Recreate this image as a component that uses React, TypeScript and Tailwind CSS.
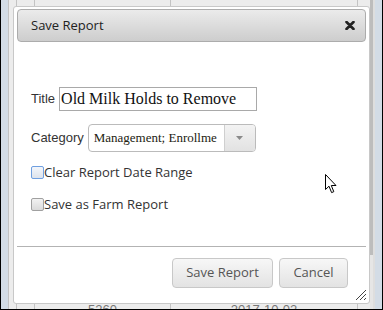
import React from "react";

const sans = { fontFamily: '"Open Sans", "Liberation Sans", sans-serif' };

function Background() {
  // the grid page that sits behind the dialog
  const cols = [
    { w: "w-[8px]", text: "" },
    { w: "w-[18px]", text: "" },
    { w: "w-[136px]", text: "5260" },
    { w: "w-[187px]", text: "2017-10-02" },
    { w: "w-[13px]", text: "" },
  ];
  return (
    <div className="flex h-full">
      <div className="w-[7px] bg-[#d3dce6]" />
      <div className="flex flex-1">
        {cols.map((c, i) => (
          <div
            key={i}
            className={`${c.w} flex flex-col justify-end border-l border-[#c3c3c3] bg-[#ececec]`}
          >
            <div
              className="h-[7px] overflow-visible text-center text-[13px] leading-[16px] text-[#777]"
              style={{ fontFamily: '"Liberation Sans", sans-serif' }}
            >
              {c.text}
            </div>
          </div>
        ))}
      </div>
      <div className="flex w-[3px] flex-col bg-[#e6e6e6]">
        <div className="h-[255px] bg-[#bdbdbd]" />
      </div>
      <div className="w-[2px] bg-[#dedede]" />
      <div className="w-[7px] bg-[#d3dce6]" />
    </div>
  );
}

function Checkbox({ focused }: { focused?: boolean }) {
  return (
    <span
      className={
        focused
          ? "h-[13px] w-[13px] shrink-0 rounded-[2px] border border-[#6f9fe0] bg-gradient-to-b from-[#f3f6fb] to-[#dde3ec]"
          : "h-[13px] w-[13px] shrink-0 rounded-[2px] border border-[#a0a0a0] bg-gradient-to-b from-[#f2f2f2] to-[#dadada]"
      }
    />
  );
}

function Dialog() {
  return (
    <div className="absolute left-[12px] top-[6px] h-[298px] w-[357px] rounded-[3px] border border-[#c8c8c8] bg-white px-[3px] pt-[2px]">
      <div
        className="flex h-[33px] items-center justify-between rounded-[4px] border border-[#acacac] bg-gradient-to-b from-[#ebebeb] to-[#cdcdcd] pl-[13px] pr-[10px] text-[13px] text-[#222]"
        style={sans}
      >
        <span>Save Report</span>
        <svg width="10" height="9" viewBox="0 0 10 9">
          <path d="M1.5 1 L8.5 8 M8.5 1 L1.5 8" stroke="#222" strokeWidth="2.6" strokeLinecap="round" />
        </svg>
      </div>

      <div className="px-[14px]" style={{ fontFamily: '"Liberation Sans", Arial, sans-serif' }}>
        <div className="mt-[45px] flex h-[24px] items-center text-[13px] text-[#333]">
          <span>Title</span>
          <div
            className="ml-[4px] flex h-[24px] w-[198px] items-center border border-[#a9a9a9] pl-[1px] text-[16px] text-[#111]"
            style={{ fontFamily: '"Liberation Serif", serif' }}
          >
            Old Milk Holds to Remove
          </div>
        </div>

        <div className="mt-[13px] flex h-[28px] items-center text-[13px] text-[#333]">
          <span>Category</span>
          <div className="ml-[4px] flex h-[28px] w-[168px] overflow-hidden rounded-[4px] border border-[#bbbbbb]">
            <div
              className="flex flex-1 items-center whitespace-nowrap pl-[5px] text-[13px] text-[#221]"
              style={{ fontFamily: '"Liberation Serif", serif' }}
            >
              Management; Enrollme
            </div>
            <div className="flex w-[31px] items-center justify-center border-l border-[#cfcfcf] bg-gradient-to-b from-[#f3f3f3] to-[#e2e2e2]">
              <svg width="7" height="4" viewBox="0 0 7 4">
                <path d="M0 0 L7 0 L3.5 4 Z" fill="#8a8a8a" />
              </svg>
            </div>
          </div>
        </div>

        <div className="mt-[14px] flex h-[13px] items-center text-[13px] text-[#333]" style={sans}>
          <Checkbox focused />
          <span className="whitespace-nowrap">Clear Report Date Range</span>
        </div>
        <div className="mt-[19px] flex h-[13px] items-center text-[13px] text-[#333]" style={sans}>
          <Checkbox />
          <span className="whitespace-nowrap">Save as Farm Report</span>
        </div>
      </div>

      <div className="mt-[35px] h-px bg-[#b3b3b3]" />

      <div className="mt-[11px] flex justify-end gap-[6px] pr-[18px] text-[13px] text-[#555]" style={sans}>
        <button className="h-[30px] w-[101px] rounded-[4px] border border-[#c8c8c8] bg-gradient-to-b from-[#f7f7f7] to-[#e3e3e3]">
          Save Report
        </button>
        <button className="h-[30px] w-[69px] rounded-[4px] border border-[#c8c8c8] bg-gradient-to-b from-[#f7f7f7] to-[#e3e3e3]">
          Cancel
        </button>
      </div>

      <svg className="absolute bottom-[2px] right-[2px]" width="12" height="12" viewBox="0 0 12 12">
        <path d="M11 1 L1 11 M11 5 L5 11 M11 9 L9 11" stroke="#444" strokeWidth="1" />
      </svg>
    </div>
  );
}

export default function App() {
  return (
    <div className="relative h-[310px] w-[383px] overflow-hidden border-b border-l border-r border-black">
      <Background />
      <Dialog />
      <svg className="absolute left-[324px] top-[174px]" width="13" height="21" viewBox="0 0 13 21">
        <path
          d="M0.5 0.5 L0.5 15.5 L4 12.2 L6.6 18.6 L8.8 17.7 L6.3 11.5 L11 11.5 Z"
          fill="#fff"
          stroke="#000"
          strokeWidth="1"
          strokeLinejoin="miter"
        />
      </svg>
    </div>
  );
}
